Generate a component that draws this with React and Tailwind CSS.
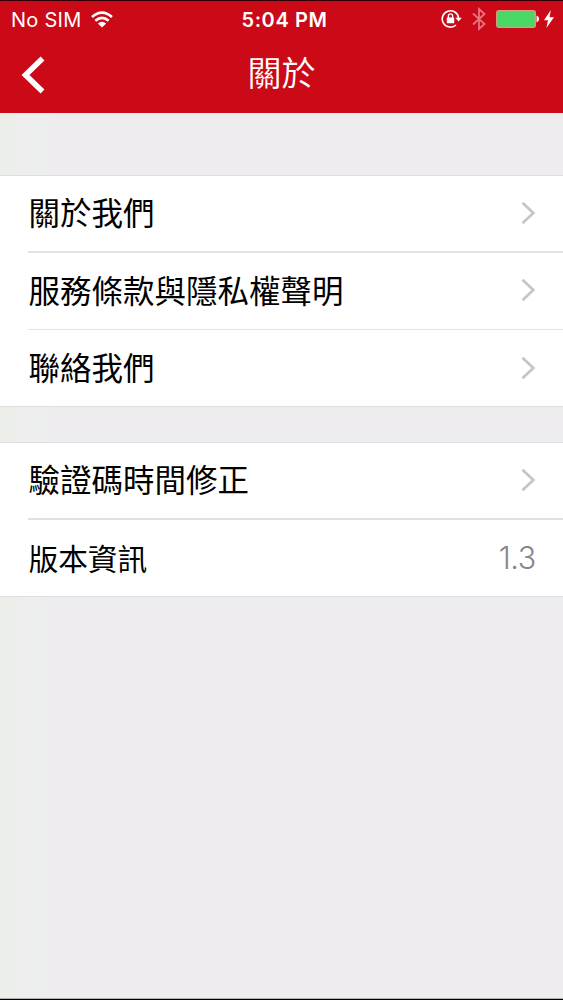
const cjk = "font-['Noto_Sans_CJK_TC',sans-serif]";

const sections = [
  [
    { label: "關於我們", size: "text-[31.5px]", row: "h-[75px] pb-[2px]", line: "h-[2px] bg-[#e2e1e4]" },
    { label: "服務條款與隱私權聲明", size: "text-[31.5px]", row: "h-[76px] pb-[2px]", line: "h-px bg-[#e4e3e6]" },
    { label: "聯絡我們", size: "text-[31.5px]", row: "h-[76px] pb-[1px]" },
  ],
  [
    { label: "驗證碼時間修正", size: "text-[31.5px]", row: "h-[75px] pb-[2px]", line: "h-[2px] bg-[#e0dfe2]" },
    { label: "版本資訊", size: "text-[29.7px]", row: "h-[76px]", value: "1.3" },
  ],
];

function Wifi() {
  return (
    <svg className="ml-[10px] h-[17px] w-[22px]" viewBox="0 0 22 17" fill="none" stroke="white" strokeWidth="2.6">
      <path d="M1 6 Q11 -2.8 21 6" />
      <path d="M4.3 9.8 Q11 4 17.7 9.8" />
      <path d="M11 16.4 L6.8 12.5 Q11 9.2 15.2 12.5Z" fill="white" stroke="none" />
    </svg>
  );
}

function RotationLock() {
  return (
    <svg className="h-[20px] w-[21px]" viewBox="0 0 21 20" fill="none" stroke="white">
      <path d="M17.6 9A8.2 8.2 0 1 0 15 16" strokeWidth="1.6" />
      <path d="M14.4 8.8h6.4l-3.2 3.8z" fill="white" stroke="none" />
      <rect x="5.8" y="8.6" width="7.4" height="5.6" rx=".5" fill="white" stroke="none" />
      <path d="M7.4 9V7a2.1 2.1 0 0 1 4.2 0v2" strokeWidth="1.4" />
    </svg>
  );
}

function Bluetooth() {
  return (
    <svg className="ml-[10px] h-[24px] w-[14px]" viewBox="0 0 14 24" fill="none" stroke="#e8757f" strokeWidth="1.8">
      <path d="M1 6.5l11.5 10.5-5.5 5v-20l5.5 5L1 17.5" />
    </svg>
  );
}

function Battery() {
  return (
    <svg className="ml-[10px] h-[18px] w-[44px]" viewBox="0 0 44 18">
      <rect x=".7" y=".7" width="38.6" height="16.6" rx="2" fill="#4ad865" stroke="#df9a83" strokeWidth="1.3" />
      <path d="M40.5 5.5q2.6.7 2.6 3.5t-2.6 3.5z" fill="#fff" />
    </svg>
  );
}

function Chevron() {
  return (
    <svg className="h-[24px] w-[15px]" viewBox="0 0 15 24" fill="none" stroke="#c7c5ca" strokeWidth="2.8">
      <path d="M1.5 1.7 12.3 12 1.5 22.3" />
    </svg>
  );
}

function Row({ label, size, row, line, value }) {
  return (
    <>
      <div className={`flex items-center justify-between pl-[28.5px] pr-[27px] ${row}`}>
        <span className={`whitespace-nowrap pb-[1px] leading-none text-black ${cjk} ${size}`}>{label}</span>
        {value ? (
          <span className="pt-[1px] font-['Inter',sans-serif] text-[30.5px] font-light leading-none tracking-[-0.3px] text-[#88868a]">
            {value}
          </span>
        ) : (
          <Chevron />
        )}
      </div>
      {line && <div className={`ml-[28px] ${line}`} />}
    </>
  );
}

export default function App() {
  return (
    <div className="flex h-[1000px] w-[563px] flex-col overflow-hidden border-b border-black bg-[linear-gradient(90deg,#eceeea_16px,#edeeed_17px,#edeeef_47px,#eeecef_49px)]">
      <header className="h-[113px] shrink-0 border-t border-[#300006] bg-[#cb0917] text-white">
        <div className="grid h-[36px] grid-cols-[1fr_auto_1fr] items-center pl-[11px] pr-[9px] font-['Inter',sans-serif] text-[20px]">
          <div className="flex items-center">
            <span className="pt-[1px] tracking-[0.25px]">No SIM</span>
            <Wifi />
          </div>
          <span className="pl-[4px] pt-[1px] font-semibold tracking-[0.6px]">5:04 PM</span>
          <div className="flex items-center justify-end">
            <RotationLock />
            <Bluetooth />
            <Battery />
            <svg className="ml-[4px] h-[18px] w-[10px]" viewBox="0 0 10 18" fill="white">
              <path d="M6.8 0 0 10.2h4L2.4 18 10 7.3H5.6z" />
            </svg>
          </div>
        </div>
        <div className="grid h-[76px] grid-cols-[1fr_auto_1fr] items-center px-[21px]">
          <svg className="h-[40px] w-[25px]" viewBox="0 0 25 40" fill="none" stroke="white" strokeWidth="5.5">
            <path d="M21.5 3.5 4.5 20l17 16.5" />
          </svg>
          <h1 className={`pb-[7px] text-[34px] font-[350] leading-none ${cjk}`}>關於</h1>
        </div>
      </header>
      <main className="flex grow flex-col gap-[35px] pt-[62px]">
        {sections.map((rows) => (
          <section key={rows[0].label} className="border-y border-[#dddcdf] bg-white">
            {rows.map((item) => (
              <Row key={item.label} {...item} />
            ))}
          </section>
        ))}
      </main>
      <div className="h-px bg-[#b4b3b5]" />
    </div>
  );
}
